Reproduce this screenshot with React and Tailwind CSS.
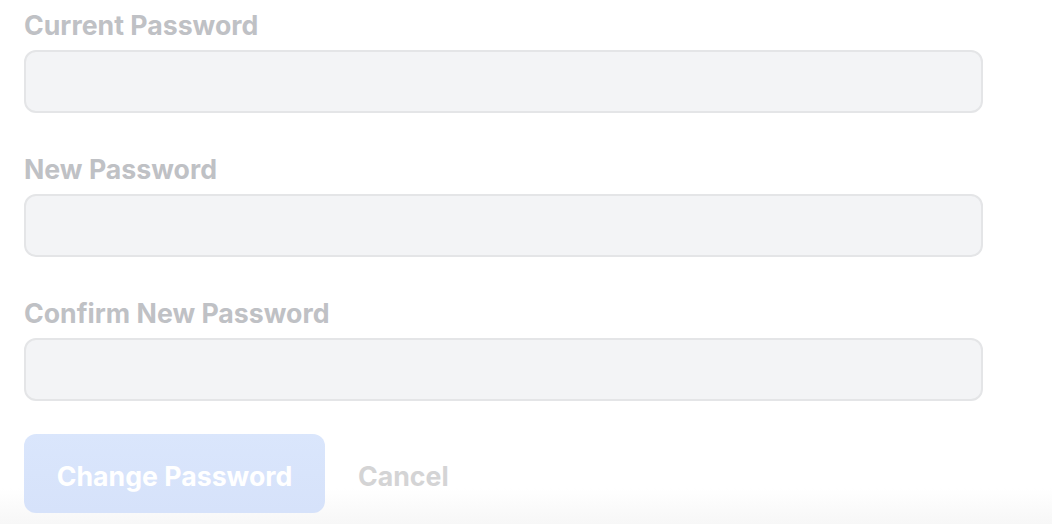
export default function App() {
  const fields = ["Current Password", "New Password", "Confirm New Password"];

  return (
    <div className="relative min-h-[524px] w-full bg-white font-['Inter',sans-serif] overflow-hidden">
      <div className="pointer-events-none absolute bottom-0 left-0 right-0 h-[36px] bg-gradient-to-b from-white to-[#f7f7f7]" />
      <form className="relative flex flex-col px-6 pt-[5px]">
        {fields.map((label) => (
          <div key={label} className="flex flex-col mb-[36px]">
            <label className="text-[26.7px] font-bold leading-[40px] text-[#bfc1c5] mb-[5px]">{label}</label>
            <input
              type="password"
              className="w-[959px] h-[63px] rounded-[12px] border-2 border-[#e4e5e7] bg-[#f3f4f6] px-4 outline-none"
            />
          </div>
        ))}
        <div className="flex items-center gap-[33px] -mt-[3px]">
          <button
            type="button"
            className="w-[301px] h-[79px] pt-[5px] rounded-[12px] bg-gradient-to-b from-[#dae6fc] to-[#d6e2fa] text-white text-[26.7px] font-bold"
          >
            Change Password
          </button>
          <button type="button" className="pt-[5px] text-[26.7px] font-bold text-[#d4d4d5]">
            Cancel
          </button>
        </div>
      </form>
    </div>
  );
}
